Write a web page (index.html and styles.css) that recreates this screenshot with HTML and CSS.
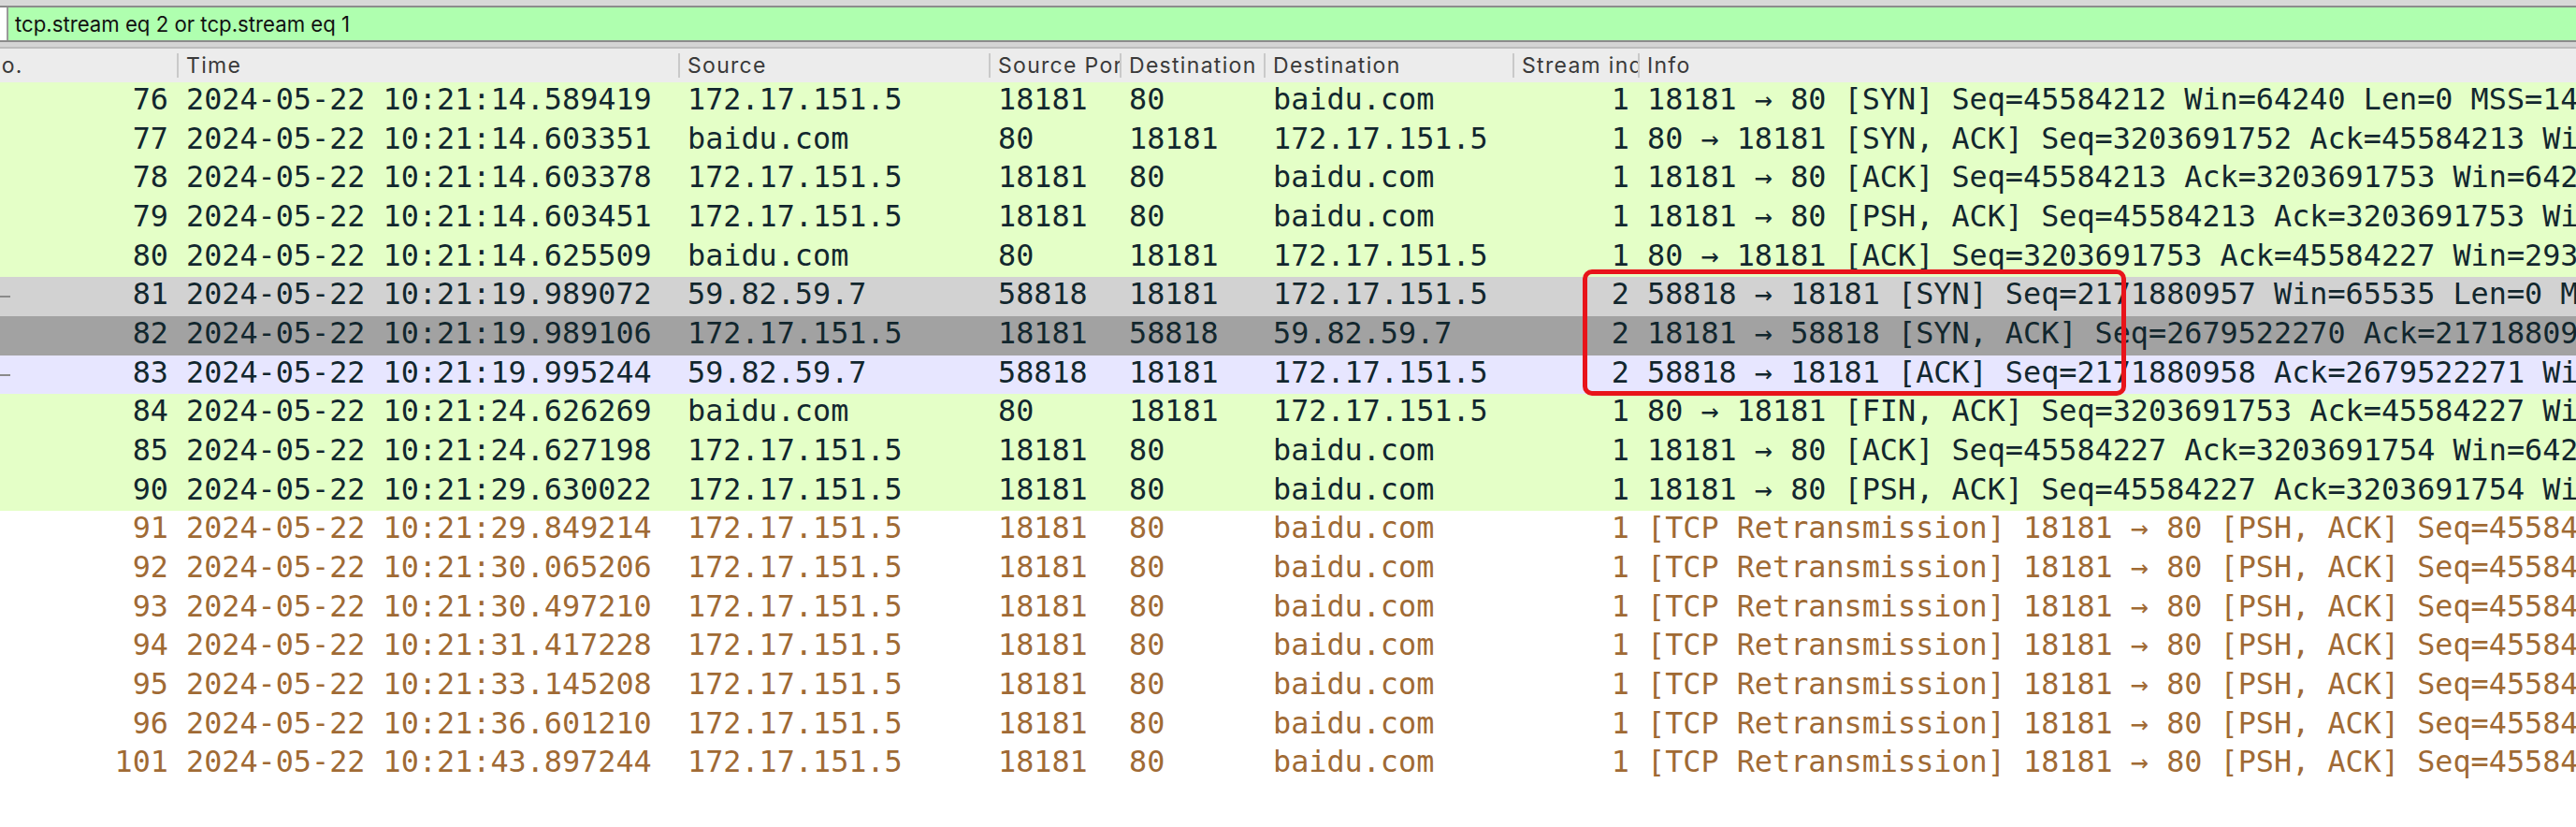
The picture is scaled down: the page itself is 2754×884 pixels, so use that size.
FILE: index.html
```html
<!DOCTYPE html>
<html>
<head>
<meta charset="utf-8">
<link rel="stylesheet" href="styles.css">
</head>
<body>
<div class="app">
  <div class="topstrip"></div>
  <div class="filterbar">
    <div class="bookmark"></div>
    <div class="filter">tcp.stream eq 2 or tcp.stream eq 1</div>
  </div>
  <div class="splitter"></div>
  <div class="table">
    <div class="hrow">
      <div class="hcell first">No.</div>
      <div class="hcell">Time</div>
      <div class="hcell">Source</div>
      <div class="hcell">Source Port</div>
      <div class="hcell">Destination Port</div>
      <div class="hcell">Destination</div>
      <div class="hcell">Stream index</div>
      <div class="hcell">Info</div>
    </div>
    <div class="rows">
      <div class="row green"><div class="c num">76</div><div class="c">2024-05-22 10:21:14.589419</div><div class="c">172.17.151.5</div><div class="c">18181</div><div class="c">80</div><div class="c">baidu.com</div><div class="c num">1</div><div class="c info">18181 → 80 [SYN] Seq=45584212 Win=64240 Len=0 MSS=1460 SACK_PERM WS=256</div></div>
      <div class="row green"><div class="c num">77</div><div class="c">2024-05-22 10:21:14.603351</div><div class="c">baidu.com</div><div class="c">80</div><div class="c">18181</div><div class="c">172.17.151.5</div><div class="c num">1</div><div class="c info">80 → 18181 [SYN, ACK] Seq=3203691752 Ack=45584213 Win=29200 Len=0 MSS=1460</div></div>
      <div class="row green"><div class="c num">78</div><div class="c">2024-05-22 10:21:14.603378</div><div class="c">172.17.151.5</div><div class="c">18181</div><div class="c">80</div><div class="c">baidu.com</div><div class="c num">1</div><div class="c info">18181 → 80 [ACK] Seq=45584213 Ack=3203691753 Win=64240 Len=0</div></div>
      <div class="row green"><div class="c num">79</div><div class="c">2024-05-22 10:21:14.603451</div><div class="c">172.17.151.5</div><div class="c">18181</div><div class="c">80</div><div class="c">baidu.com</div><div class="c num">1</div><div class="c info">18181 → 80 [PSH, ACK] Seq=45584213 Ack=3203691753 Win=64240 Len=14</div></div>
      <div class="row green"><div class="c num">80</div><div class="c">2024-05-22 10:21:14.625509</div><div class="c">baidu.com</div><div class="c">80</div><div class="c">18181</div><div class="c">172.17.151.5</div><div class="c num">1</div><div class="c info">80 → 18181 [ACK] Seq=3203691753 Ack=45584227 Win=29312 Len=0</div></div>
      <div class="row light rel"><div class="c num">81</div><div class="c">2024-05-22 10:21:19.989072</div><div class="c">59.82.59.7</div><div class="c">58818</div><div class="c">18181</div><div class="c">172.17.151.5</div><div class="c num">2</div><div class="c info">58818 → 18181 [SYN] Seq=2171880957 Win=65535 Len=0 MSS=1460</div></div>
      <div class="row dark"><div class="c num">82</div><div class="c">2024-05-22 10:21:19.989106</div><div class="c">172.17.151.5</div><div class="c">18181</div><div class="c">58818</div><div class="c">59.82.59.7</div><div class="c num">2</div><div class="c info">18181 → 58818 [SYN, ACK] Seq=2679522270 Ack=2171880958 Win=64240 Len=0</div></div>
      <div class="row purple rel"><div class="c num">83</div><div class="c">2024-05-22 10:21:19.995244</div><div class="c">59.82.59.7</div><div class="c">58818</div><div class="c">18181</div><div class="c">172.17.151.5</div><div class="c num">2</div><div class="c info">58818 → 18181 [ACK] Seq=2171880958 Ack=2679522271 Win=65535 Len=0</div></div>
      <div class="row green"><div class="c num">84</div><div class="c">2024-05-22 10:21:24.626269</div><div class="c">baidu.com</div><div class="c">80</div><div class="c">18181</div><div class="c">172.17.151.5</div><div class="c num">1</div><div class="c info">80 → 18181 [FIN, ACK] Seq=3203691753 Ack=45584227 Win=29312 Len=0</div></div>
      <div class="row green"><div class="c num">85</div><div class="c">2024-05-22 10:21:24.627198</div><div class="c">172.17.151.5</div><div class="c">18181</div><div class="c">80</div><div class="c">baidu.com</div><div class="c num">1</div><div class="c info">18181 → 80 [ACK] Seq=45584227 Ack=3203691754 Win=64240 Len=0</div></div>
      <div class="row green"><div class="c num">90</div><div class="c">2024-05-22 10:21:29.630022</div><div class="c">172.17.151.5</div><div class="c">18181</div><div class="c">80</div><div class="c">baidu.com</div><div class="c num">1</div><div class="c info">18181 → 80 [PSH, ACK] Seq=45584227 Ack=3203691754 Win=64240 Len=1</div></div>
      <div class="row retx"><div class="c num">91</div><div class="c">2024-05-22 10:21:29.849214</div><div class="c">172.17.151.5</div><div class="c">18181</div><div class="c">80</div><div class="c">baidu.com</div><div class="c num">1</div><div class="c info">[TCP Retransmission] 18181 → 80 [PSH, ACK] Seq=45584227 Ack=3203691754</div></div>
      <div class="row retx"><div class="c num">92</div><div class="c">2024-05-22 10:21:30.065206</div><div class="c">172.17.151.5</div><div class="c">18181</div><div class="c">80</div><div class="c">baidu.com</div><div class="c num">1</div><div class="c info">[TCP Retransmission] 18181 → 80 [PSH, ACK] Seq=45584227 Ack=3203691754</div></div>
      <div class="row retx"><div class="c num">93</div><div class="c">2024-05-22 10:21:30.497210</div><div class="c">172.17.151.5</div><div class="c">18181</div><div class="c">80</div><div class="c">baidu.com</div><div class="c num">1</div><div class="c info">[TCP Retransmission] 18181 → 80 [PSH, ACK] Seq=45584227 Ack=3203691754</div></div>
      <div class="row retx"><div class="c num">94</div><div class="c">2024-05-22 10:21:31.417228</div><div class="c">172.17.151.5</div><div class="c">18181</div><div class="c">80</div><div class="c">baidu.com</div><div class="c num">1</div><div class="c info">[TCP Retransmission] 18181 → 80 [PSH, ACK] Seq=45584227 Ack=3203691754</div></div>
      <div class="row retx"><div class="c num">95</div><div class="c">2024-05-22 10:21:33.145208</div><div class="c">172.17.151.5</div><div class="c">18181</div><div class="c">80</div><div class="c">baidu.com</div><div class="c num">1</div><div class="c info">[TCP Retransmission] 18181 → 80 [PSH, ACK] Seq=45584227 Ack=3203691754</div></div>
      <div class="row retx"><div class="c num">96</div><div class="c">2024-05-22 10:21:36.601210</div><div class="c">172.17.151.5</div><div class="c">18181</div><div class="c">80</div><div class="c">baidu.com</div><div class="c num">1</div><div class="c info">[TCP Retransmission] 18181 → 80 [PSH, ACK] Seq=45584227 Ack=3203691754</div></div>
      <div class="row retx"><div class="c num">101</div><div class="c">2024-05-22 10:21:43.897244</div><div class="c">172.17.151.5</div><div class="c">18181</div><div class="c">80</div><div class="c">baidu.com</div><div class="c num">1</div><div class="c info">[TCP Retransmission] 18181 → 80 [PSH, ACK] Seq=45584227 Ack=3203691754</div></div>
      <div class="highlight"></div>
    </div>
  </div>
</div>
</body>
</html>
```

FILE: styles.css
```css
html, body {
  margin: 0;
  padding: 0;
  background: #ffffff;
  overflow: hidden;
}
.app {
  width: 2754px;
  height: 884px;
  overflow: hidden;
  background: #ffffff;
}
.topstrip {
  height: 6px;
  background: #d8d8d8;
}
.filterbar {
  display: flex;
  height: 35px;
  border-top: 2px solid #8c8c8c;
  border-bottom: 2px solid #8c8c8c;
}
.bookmark {
  width: 7px;
  background: #ffffff;
  border-right: 2px solid #9a9a9a;
}
.filter {
  flex: 1;
  background: #afffaf;
  padding-left: 7px;
  font-family: Inter, "Liberation Sans", sans-serif;
  font-size: 22.2px;
  line-height: 35px;
  color: #111111;
}
.splitter {
  height: 5px;
  background: #d4d4d4;
  border-bottom: 2px solid #bcbcbc;
}
.table {
  margin-left: -28px;
  width: 2782px;
}
.hrow, .row {
  display: grid;
  grid-template-columns: 217px 536px 332px 140px 154px 266px 134px 1fr;
}
.hrow {
  height: 26px;
  padding: 5px 0;
  background: #ececec;
}
.hcell {
  border-left: 2px solid #c9c9c9;
  padding-left: 8px;
  font-family: Inter, "Liberation Sans", sans-serif;
  font-size: 23px;
  letter-spacing: 1.3px;
  line-height: 26px;
  color: #3a3a3a;
  white-space: nowrap;
  overflow: hidden;
}
.hcell.first {
  border-left: 0;
  padding-left: 11px;
}
.rows {
  position: relative;
}
.row {
  height: 41.667px;
  color: #12272e;
  font-family: "DejaVu Sans Mono", "Liberation Mono", monospace;
  font-size: 31.8px;
  position: relative;
}
.c {
  padding: 0 9px 0 10px;
  line-height: 35.5px;
  white-space: nowrap;
  overflow: hidden;
}
.c.num {
  text-align: right;
  padding-right: 9px;
}
.green { background: #e4ffc7; }
.light { background: #d2d2d2; }
.dark { background: #a2a2a2; }
.purple { background: #e7e6ff; }
.retx { background: #ffffff; color: #a06a34; }
.rel::before {
  content: "";
  position: absolute;
  left: 28px;
  top: 20px;
  width: 11px;
  height: 2px;
  background: #8a8a8a;
}
.highlight {
  position: absolute;
  left: 1720px;
  top: 200px;
  width: 571px;
  height: 125px;
  border: 5px solid #e8141a;
  border-radius: 10px;
}
```
